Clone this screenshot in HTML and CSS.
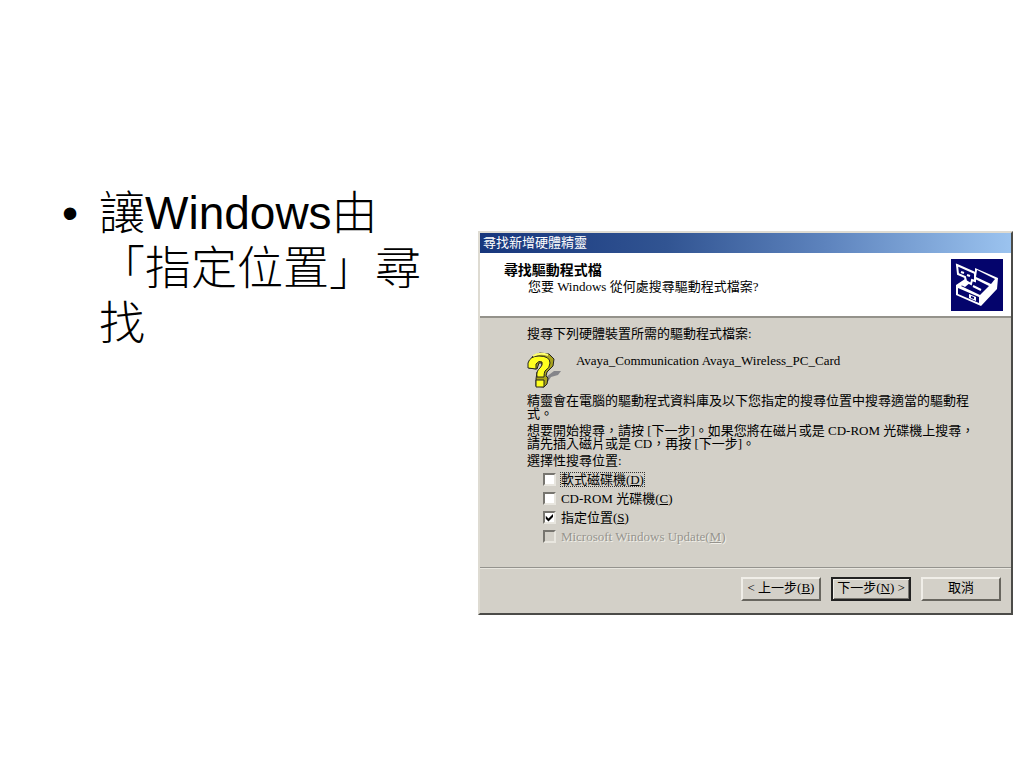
FILE: index.html
```html
<!DOCTYPE html>
<html lang="zh-Hant">
<head>
    <meta charset="UTF-8">
    <meta name="viewport" content="width=device-width, initial-scale=1.0">
    <title>尋找新增硬體精靈</title>
    <link rel="stylesheet" href="styles.css">
</head>
<body>
    <main class="slide">
        <ul class="points">
            <li>讓Windows由「指定位置」尋找</li>
        </ul>

        <form class="wizard">
            <div class="titlebar">尋找新增硬體精靈</div>
            <header class="banner">
                <div class="banner-text">
                    <h1>尋找驅動程式檔</h1>
                    <p>您要 Windows 從何處搜尋驅動程式檔案?</p>
                </div>
                <svg class="device" viewBox="0 0 52 52" aria-hidden="true">
                    <rect width="52" height="52" fill="#04046c"/>
                    <path d="M24 9 L47 19 L46 30 L30 47 L5 36 L5 26 L14 20 L24 15 Z" fill="#fff"/>
                    <path d="M26 11 L44 20 L40 25 L25 18 Z" fill="#04046c"/>
                    <path d="M24 20 L38 27 L29 36 L10 27 L16 23 Z" fill="#04046c"/>
                    <path d="M7 29 L28 38 L28 44 L7 35 Z" fill="#04046c"/>
                    <path d="M18 35 l7 3 v4 l-7 -3z" fill="#fff"/>
                    <path d="M20 37 l3 1 v2 l-3 -1z" fill="#04046c"/>
                    <path d="M10 26 L18 21 L20 23 L14 28 Z" fill="#fff"/>
                    <path d="M6 6 L24 14 L24 22 L21 21 L20 25 L15 22 L14 18 L7 15 Z" fill="#04046c" stroke="#fff" stroke-width="2"/>
                    <path d="M10 13 l3 1 M16 16 l3 1" stroke="#fff" stroke-width="2"/>
                    <path d="M22 27 l8 4" stroke="#fff" stroke-width="2"/>
                </svg>
            </header>

            <section class="content">
                <p>搜尋下列硬體裝置所需的驅動程式檔案:</p>
                <div class="hardware">
                    <svg class="question" viewBox="0 0 34 36" aria-hidden="true">
                        <path d="M19 25 L27 19 L34 19 L31 23 L24 25 L20 31 L17 31 Z" fill="#85858a"/>
                        <path d="M2 11 L6 4 L13 1 L22 2 L27 7 L26 14 L20 20 L19 24 L21 26 L20 32 L17 35 L9 34 L9 27 L10 20 L15 15 L15 11 L12 11 L10 17 L2 16 Z" fill="#a8a21c" stroke="#222" stroke-width="1"/>
                        <path d="M1 11 Q3 4 12 4 Q23 4 23 11 Q23 16 18 19 Q17 21 17 25 L10 25 Q9 19 13 16 Q16 13 15 10 Q12 8 9 12 L9 17 L1 16 Z M9 28 H17 V35 H9 Z" fill="#ffff20" stroke="#222" stroke-width="1"/>
                        <path d="M6 4 Q13 0 21 3" fill="none" stroke="#ffff70" stroke-width="2"/>
                    </svg>
                    <p>Avaya_Communication Avaya_Wireless_PC_Card</p>
                </div>
                <p class="note">精靈會在電腦的驅動程式資料庫及以下您指定的搜尋位置中搜尋適當的驅動程式。</p>
                <p class="note">想要開始搜尋，請按 [下一步]。如果您將在磁片或是 CD-ROM 光碟機上搜尋，請先插入磁片或是 CD，再按 [下一步]。</p>
                <fieldset class="places">
                    <legend>選擇性搜尋位置:</legend>
                    <div class="place">
                        <input type="checkbox" id="floppy">
                        <label class="focused" for="floppy">軟式磁碟機(<u>D</u>)</label>
                    </div>
                    <div class="place">
                        <input type="checkbox" id="cdrom">
                        <label for="cdrom">CD-ROM 光碟機(<u>C</u>)</label>
                    </div>
                    <div class="place">
                        <input type="checkbox" id="specify" checked>
                        <label for="specify">指定位置(<u>S</u>)</label>
                    </div>
                    <div class="place">
                        <input type="checkbox" id="update" disabled>
                        <label for="update">Microsoft Windows Update(<u>M</u>)</label>
                    </div>
                </fieldset>
            </section>

            <footer class="actions">
                <button type="button">&lt; 上一步(<u>B</u>)</button>
                <button type="button" class="default">下一步(<u>N</u>) &gt;</button>
                <button type="button">取消</button>
            </footer>
        </form>
    </main>
</body>
</html>
```
FILE: styles.css
```css
* {
    box-sizing: border-box;
}
body {
    margin: 0;
    background-color: #fff;
    color: #000;
}
h1, p, ul, fieldset, legend {
    margin: 0;
    padding: 0;
}
.slide {
    display: grid;
    grid-template-columns: 11fr 16fr;
    gap: 48px;
    align-items: start;
    padding: 186px 11px 40px 62px;
}

/* bullet text */
.points {
    list-style: none;
    font-family: "Liberation Sans", "Noto Sans CJK TC", sans-serif;
    font-size: 46px;
    font-weight: 300;
    line-height: 55px;
}
.points li {
    display: flex;
}
.points li::before {
    content: "•";
    flex: 0 0 37px;
}

/* wizard window */
.wizard {
    margin-top: 45px;
    border: 2px solid;
    border-color: #dedbd2 #4b4b48 #4b4b48 #dedbd2;
    background-color: #d3d0c8;
    font-family: "Liberation Serif", "Noto Sans CJK TC", serif;
    font-size: 13px;
    line-height: 13px;
}
.titlebar {
    padding: 0 3px;
    background: linear-gradient(to right, #17367c, #315492 35%, #5d83bd 65%, #9bc3ef);
    color: #fff;
    line-height: 20px;
}
.banner {
    display: flex;
    justify-content: space-between;
    align-items: flex-start;
    padding: 6px 8px 5px 24px;
    border-bottom: 2px solid #94928b;
    background-color: #fff;
}
.banner-text {
    padding-top: 4px;
    line-height: 16px;
}
.banner h1 {
    font-size: 14px;
    line-height: 16px;
}
.banner p {
    padding-left: 24px;
}
.device {
    width: 52px;
    height: 52px;
}
.content {
    padding: 9px 34px 21px 47px;
}
.hardware {
    display: flex;
    gap: 15px;
    padding: 12px 0 6px;
}
.hardware p {
    padding-top: 2px;
}
.question {
    width: 34px;
    height: 36px;
}
.note {
    margin-bottom: 4px;
}
.places {
    min-width: 0;
    border: 0;
}
.places legend {
    margin-bottom: 3px;
}
.place {
    display: flex;
    align-items: center;
    gap: 5px;
    height: 19px;
    padding-left: 16px;
}
.place input {
    appearance: none;
    width: 13px;
    height: 13px;
    margin: 0;
    border: 2px solid;
    border-color: #77756f #e8e6df #e8e6df #77756f;
    background-color: #fff;
}
.place input:checked::before {
    content: "";
    display: block;
    width: 9px;
    height: 9px;
    background-color: #000;
    clip-path: polygon(10% 30%, 40% 60%, 90% 10%, 90% 45%, 40% 95%, 10% 65%);
}
.place input:disabled {
    background-color: #d3d0c8;
}
.place input:disabled + label {
    color: #96948e;
    text-shadow: 1px 1px #f2f0ea;
}
.focused {
    outline: 1px dotted #333;
}
.actions {
    display: flex;
    justify-content: flex-end;
    gap: 10px;
    padding: 8px 10px 12px;
    border-top: 2px groove #e8e6df;
}
.actions button {
    width: 80px;
    height: 24px;
    padding: 0 0 3px;
    border: 2px solid;
    border-color: #f0eee8 #68665f #68665f #f0eee8;
    background-color: #d3d0c8;
    color: #000;
    font: inherit;
}
.actions .default {
    border-color: #222;
    box-shadow: inset 1px 1px #f0eee8, inset -1px -1px #77756f;
}
```
